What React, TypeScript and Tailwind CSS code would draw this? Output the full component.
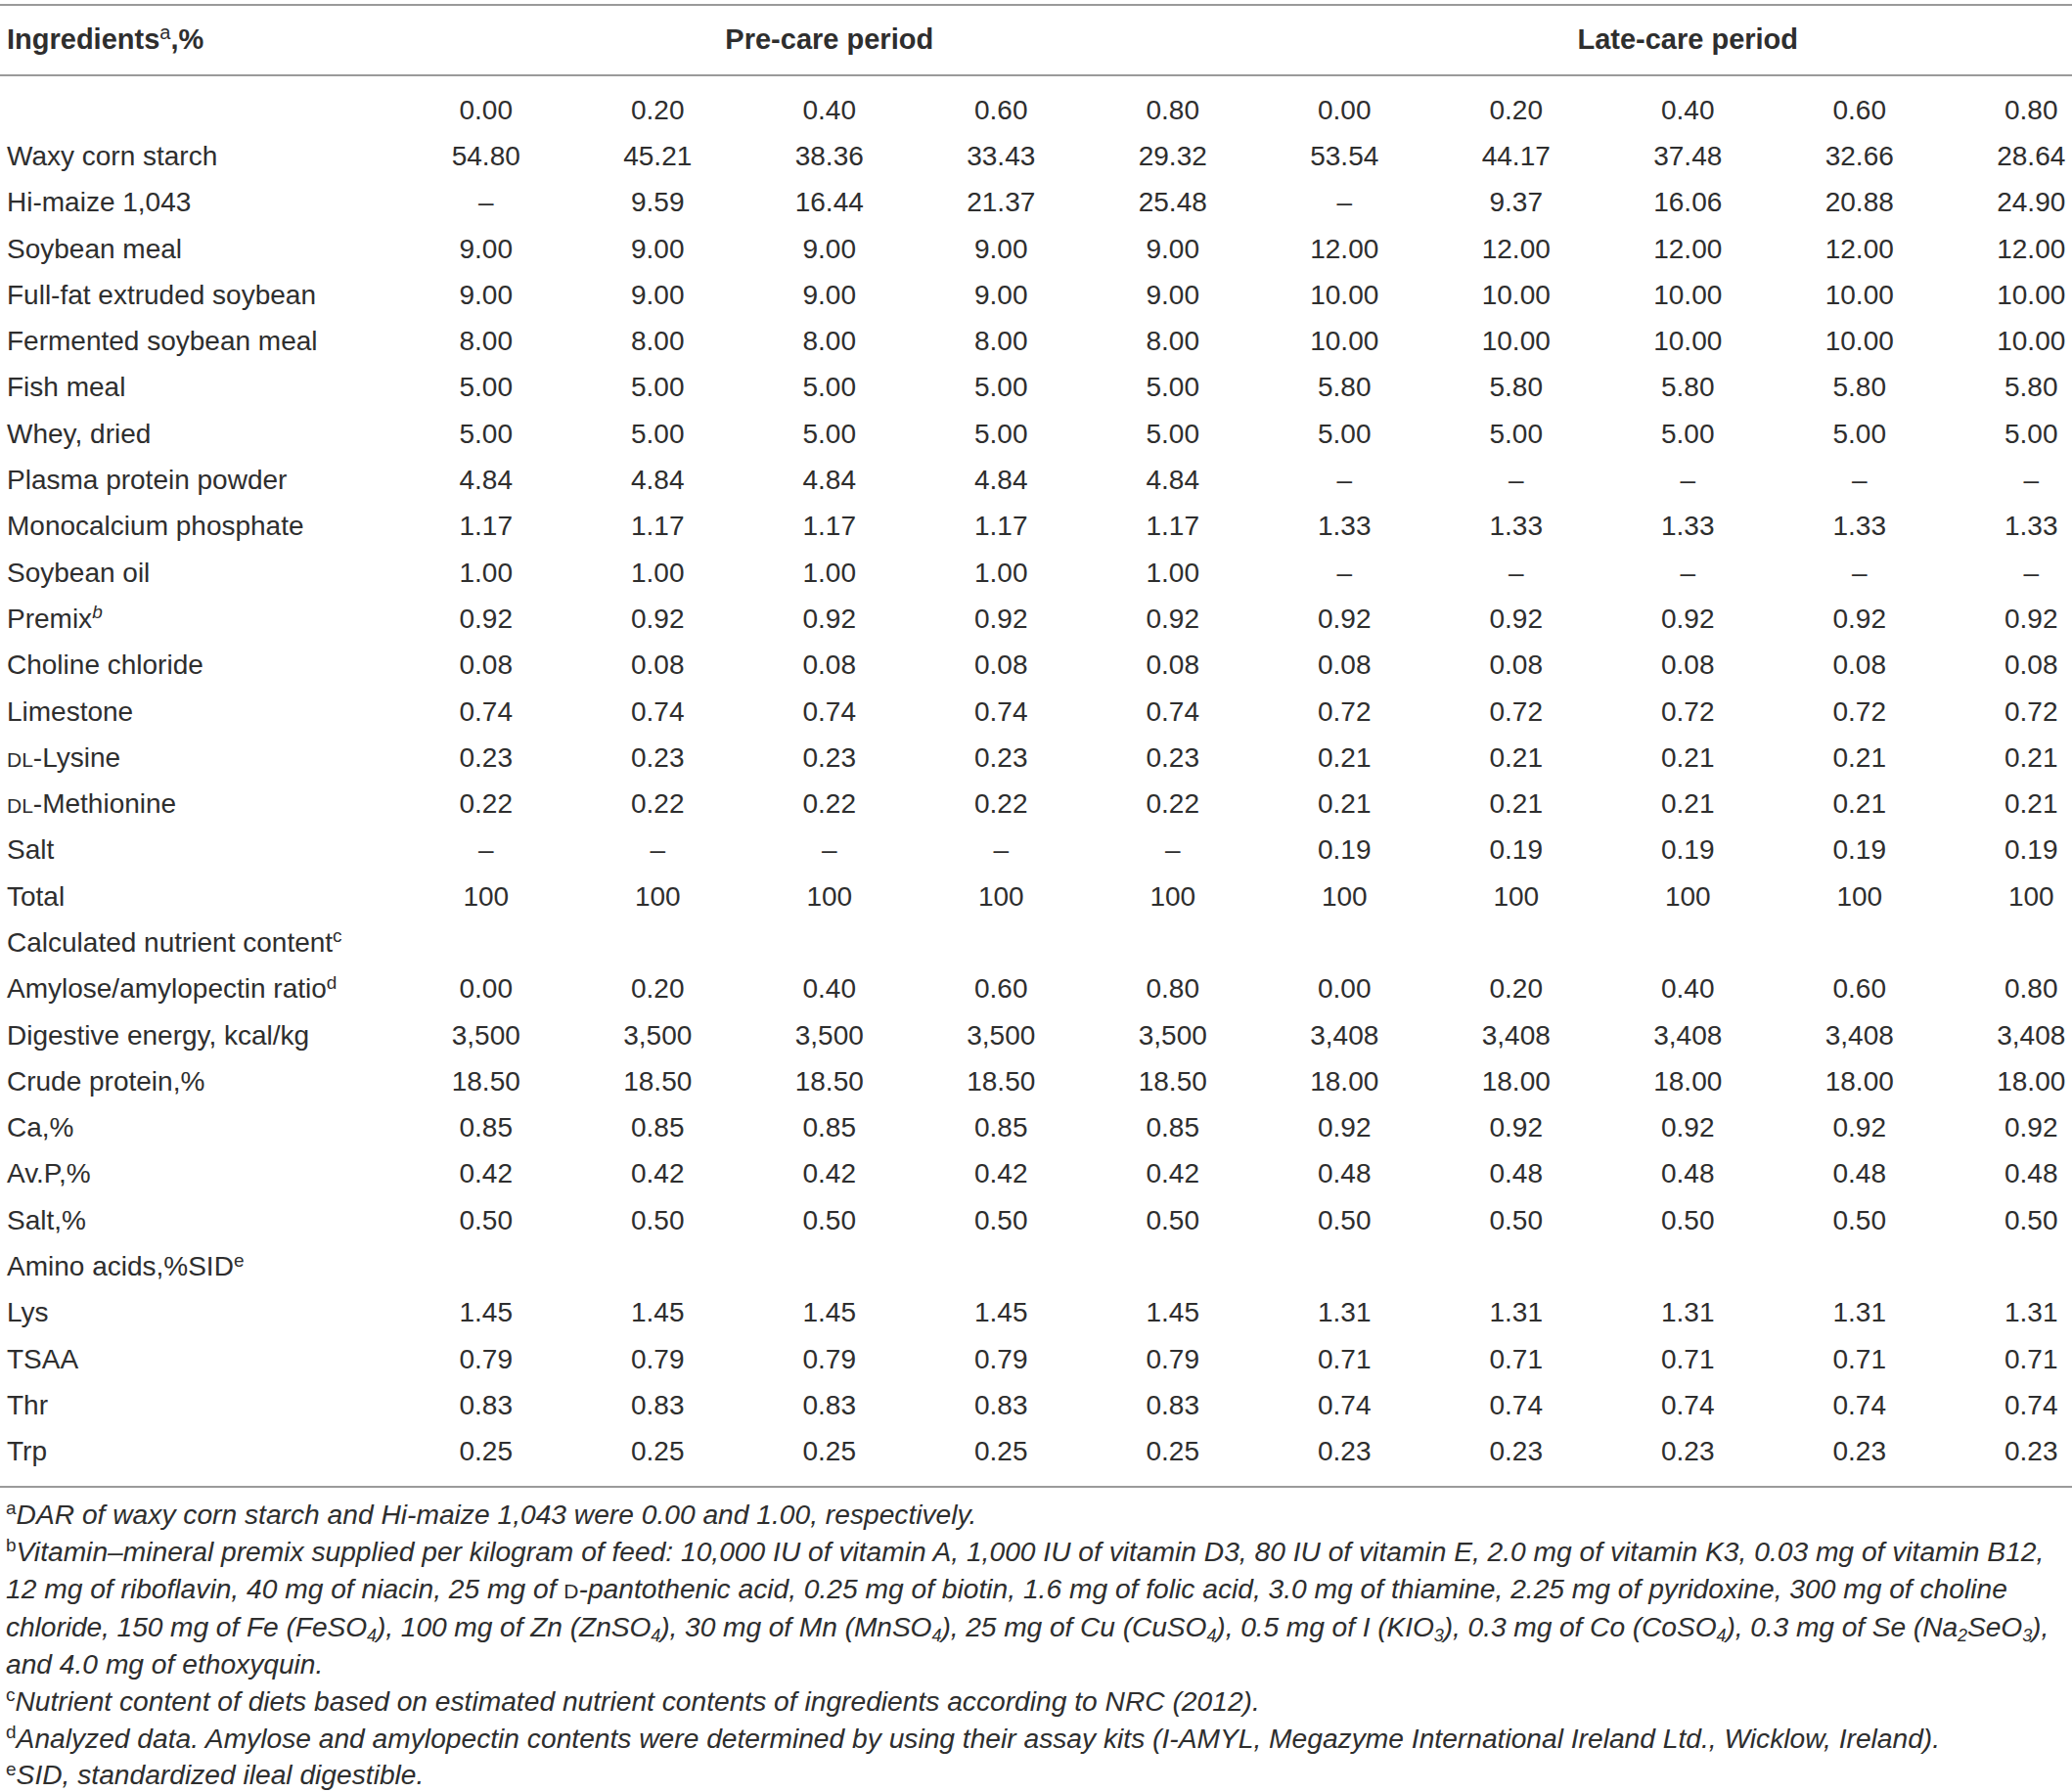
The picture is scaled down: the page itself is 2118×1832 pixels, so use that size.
import type { ReactNode } from 'react'

const D = '–'

const rep = (a: string, b: string) => [a, a, a, a, a, b, b, b, b, b]

const DL = () => <span className="text-[21px]">DL</span>

interface Row {
    label: ReactNode
    values: string[]
}

const rows: Row[] = [
    { label: '', values: ['0.00', '0.20', '0.40', '0.60', '0.80', '0.00', '0.20', '0.40', '0.60', '0.80'] },
    { label: 'Waxy corn starch', values: ['54.80', '45.21', '38.36', '33.43', '29.32', '53.54', '44.17', '37.48', '32.66', '28.64'] },
    { label: 'Hi-maize 1,043', values: [D, '9.59', '16.44', '21.37', '25.48', D, '9.37', '16.06', '20.88', '24.90'] },
    { label: 'Soybean meal', values: rep('9.00', '12.00') },
    { label: 'Full-fat extruded soybean', values: rep('9.00', '10.00') },
    { label: 'Fermented soybean meal', values: rep('8.00', '10.00') },
    { label: 'Fish meal', values: rep('5.00', '5.80') },
    { label: 'Whey, dried', values: rep('5.00', '5.00') },
    { label: 'Plasma protein powder', values: rep('4.84', D) },
    { label: 'Monocalcium phosphate', values: rep('1.17', '1.33') },
    { label: 'Soybean oil', values: rep('1.00', D) },
    { label: <>Premix<sup className="italic text-[19px]">b</sup></>, values: rep('0.92', '0.92') },
    { label: 'Choline chloride', values: rep('0.08', '0.08') },
    { label: 'Limestone', values: rep('0.74', '0.72') },
    { label: <><DL />-Lysine</>, values: rep('0.23', '0.21') },
    { label: <><DL />-Methionine</>, values: rep('0.22', '0.21') },
    { label: 'Salt', values: rep(D, '0.19') },
    { label: 'Total', values: rep('100', '100') },
    { label: <>Calculated nutrient content<sup className="text-[19px]">c</sup></>, values: [] },
    { label: <>Amylose/amylopectin ratio<sup className="text-[19px]">d</sup></>, values: ['0.00', '0.20', '0.40', '0.60', '0.80', '0.00', '0.20', '0.40', '0.60', '0.80'] },
    { label: 'Digestive energy, kcal/kg', values: rep('3,500', '3,408') },
    { label: 'Crude protein,%', values: rep('18.50', '18.00') },
    { label: 'Ca,%', values: rep('0.85', '0.92') },
    { label: 'Av.P,%', values: rep('0.42', '0.48') },
    { label: 'Salt,%', values: rep('0.50', '0.50') },
    { label: <>Amino acids,%SID<sup className="text-[19px]">e</sup></>, values: [] },
    { label: 'Lys', values: rep('1.45', '1.31') },
    { label: 'TSAA', values: rep('0.79', '0.71') },
    { label: 'Thr', values: rep('0.83', '0.74') },
    { label: 'Trp', values: rep('0.25', '0.23') },
]

const Sup = ({ children }: { children: ReactNode }) => (
    <sup className="not-italic text-[19px]">{children}</sup>
)

const Sub = ({ children }: { children: ReactNode }) => (
    <sub className="text-[18px]">{children}</sub>
)

const Rule = () => <div className="h-[2px] bg-[#9a9a9a]" />

export default function App() {
    return (
        <div className="w-[2118px] h-[1832px] bg-white text-[#2e2e2e] font-['Liberation_Sans',Arial,sans-serif] overflow-hidden">
            <div className="pt-[4px]">
                <Rule />
                {/* header */}
                <div className="grid grid-cols-[409px_repeat(9,175.5px)_1fr] h-[70px] items-center text-[29px] font-bold">
                    <div className="pl-[7px]">
                        Ingredients<sup className="font-normal text-[20px]">a</sup>,%
                    </div>
                    <div className="col-span-5 text-center">Pre-care period</div>
                    <div className="col-span-5 text-center pl-[46px]">Late-care period</div>
                </div>
                <Rule />
                {/* body */}
                <div className="py-[11px] text-[28px]">
                    {rows.map((row, i) => (
                        <div key={i} className="grid grid-cols-[409px_repeat(9,175.5px)_1fr] h-[47.3px] items-center">
                            <div className="pl-[7px] whitespace-nowrap">{row.label}</div>
                            {row.values.map((v, j) => (
                                <div key={j} className={`text-center whitespace-nowrap ${j === 9 ? 'pl-[46px]' : ''}`}>
                                    {v}
                                </div>
                            ))}
                        </div>
                    ))}
                </div>
                <Rule />
                {/* footnotes */}
                <div className="pt-[9px] pl-[6px] text-[28.2px] italic leading-[37.8px] whitespace-nowrap">
                    <div><Sup>a</Sup>DAR of waxy corn starch and Hi-maize 1,043 were 0.00 and 1.00, respectively.</div>
                    <div><Sup>b</Sup>Vitamin–mineral premix supplied per kilogram of feed: 10,000 IU of vitamin A, 1,000 IU of vitamin D3, 80 IU of vitamin E, 2.0 mg of vitamin K3, 0.03 mg of vitamin B12,</div>
                    <div>12 mg of riboflavin, 40 mg of niacin, 25 mg of <span className="not-italic text-[21px]">D</span>-pantothenic acid, 0.25 mg of biotin, 1.6 mg of folic acid, 3.0 mg of thiamine, 2.25 mg of pyridoxine, 300 mg of choline</div>
                    <div className="tracking-[-0.08px]">chloride, 150 mg of Fe (FeSO<Sub>4</Sub>), 100 mg of Zn (ZnSO<Sub>4</Sub>), 30 mg of Mn (MnSO<Sub>4</Sub>), 25 mg of Cu (CuSO<Sub>4</Sub>), 0.5 mg of I (KIO<Sub>3</Sub>), 0.3 mg of Co (CoSO<Sub>4</Sub>), 0.3 mg of Se (Na<Sub>2</Sub>SeO<Sub>3</Sub>),</div>
                    <div>and 4.0 mg of ethoxyquin.</div>
                    <div><Sup>c</Sup>Nutrient content of diets based on estimated nutrient contents of ingredients according to NRC (2012).</div>
                    <div><Sup>d</Sup>Analyzed data. Amylose and amylopectin contents were determined by using their assay kits (I-AMYL, Megazyme International Ireland Ltd., Wicklow, Ireland).</div>
                    <div><Sup>e</Sup>SID, standardized ileal digestible.</div>
                </div>
            </div>
        </div>
    )
}
